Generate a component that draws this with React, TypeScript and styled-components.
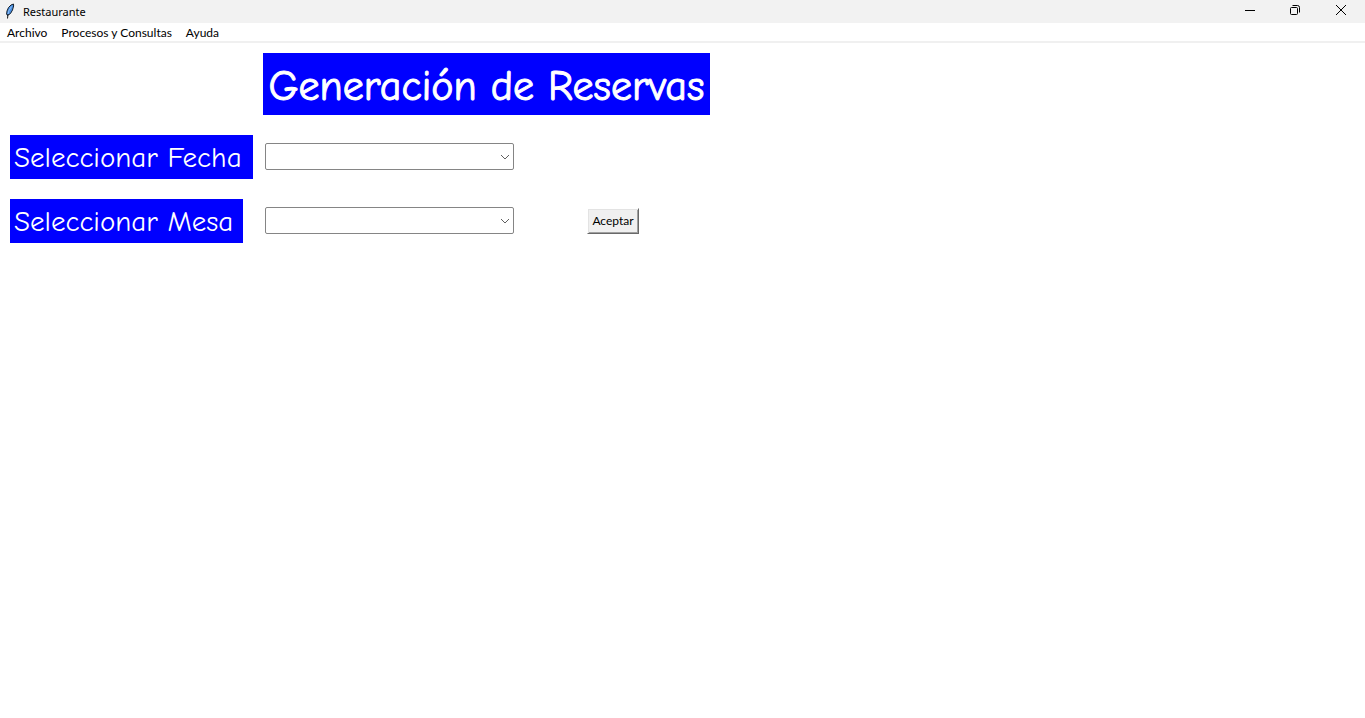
import React from "react";
import styled, { createGlobalStyle } from "styled-components";

const uiFont = `"Segoe UI", "Noto Sans", "Open Sans", sans-serif`;
const controlFont = `"Segoe UI", Lato, "Open Sans", sans-serif`;
const comicFont = `"Comic Sans MS", "Comic Neue", Lato, sans-serif`;

const GlobalStyle = createGlobalStyle`
  *, *::before, *::after { box-sizing: border-box; }
  body { margin: 0; background: #fff; color: #000; font: 11px/16px ${uiFont}; }
`;

const Window = styled.div`
  display: flex;
  flex-direction: column;
  min-height: 100vh;
`;

const TitleBar = styled.header`
  display: flex;
  align-items: center;
  height: 23px;
  padding-left: 3px;
  background: #f2f2f2;
`;

const WindowTitle = styled.span`
  flex: 1;
  margin-left: 4px;
`;

const WindowButtons = styled.div`
  display: flex;
  align-self: flex-start;
  padding-right: 1px;
`;

const WindowButton = styled.button`
  display: flex;
  align-items: center;
  justify-content: center;
  width: 46px;
  height: 20px;
  padding: 0;
  border: 0;
  background: transparent;
`;

const MenuBar = styled.nav`
  display: flex;
  height: 20px;
  border-bottom: 2px solid #f0f0f0;
`;

const MenuItem = styled.button`
  padding: 2px 7px 0;
  border: 0;
  background: transparent;
  font: 12px/16px ${controlFont};
  color: #000;
`;

const Form = styled.form`
  display: grid;
  grid-template-columns: 243px 447px;
  gap: 20px 10px;
  padding: 10px;
`;

const Heading = styled.h1`
  grid-column: 2;
  margin: 0;
  height: 62px;
  background: #00f;
  color: #fff;
  font: 400 42px/68px ${comicFont};
  -webkit-text-stroke: 1px #fff;
  text-align: center;
  white-space: nowrap;
`;

const FieldLabel = styled.label<{ $width: number }>`
  width: ${(p) => p.$width}px;
  height: 44px;
  padding-left: 4px;
  background: #00f;
  color: #fff;
  font: 400 29px/46px ${comicFont};
  white-space: nowrap;
`;

const FieldControls = styled.div`
  display: flex;
  align-items: center;
  gap: 73px;
  padding-left: 2px;
`;

const Combo = styled.div`
  display: grid;
  grid-template-rows: 27px;
  align-items: center;
  width: 249px;
  height: 28px;
  > * { grid-area: 1 / 1; }
`;

const Select = styled.select`
  appearance: none;
  width: 100%;
  height: 27px;
  padding: 0 24px 0 4px;
  border: 1px solid #858585;
  border-radius: 2px;
  background: #fff;
  font: 12px/16px ${controlFont};
`;

const Chevron = styled.svg`
  justify-self: end;
  margin-right: 4px;
  pointer-events: none;
`;

const AcceptButton = styled.button`
  width: 52px;
  height: 26px;
  padding: 0;
  border: 1px solid;
  border-color: #fff #696969 #696969 #fff;
  box-shadow: inset 1px 1px #e3e3e3, inset -1px -1px #a0a0a0;
  background: #f0f0f0;
  color: #000;
  font: 12px/16px ${controlFont};
`;

function FeatherIcon() {
  return (
    <svg width="16" height="18" viewBox="0 0 16 18" aria-hidden="true">
      <path d="M10.5 1 L8 2 L5.5 4.5 L4 8 L3.6 11 L4.5 12.5 L7.5 10.5 L9.5 7 L10.6 3 Z" fill="#4a90e2" stroke="#16202c" />
      <path d="M8.5 3.5 L6 7.5 L5 11" fill="none" stroke="#8fc0f8" />
      <path d="M5 11 L4.5 15.5" fill="none" stroke="#101418" />
    </svg>
  );
}

type ComboFieldProps = {
  id: string;
  label: string;
  labelWidth: number;
  children?: React.ReactNode;
};

function ComboField({ id, label, labelWidth, children }: ComboFieldProps) {
  return (
    <>
      <FieldLabel htmlFor={id} $width={labelWidth}>{label}</FieldLabel>
      <FieldControls>
        <Combo>
          <Select id={id} defaultValue="">
            <option value="" />
          </Select>
          <Chevron width="10" height="6" viewBox="0 0 10 6" aria-hidden="true">
            <path d="M1 1 L5 5 L9 1" fill="none" stroke="#606060" />
          </Chevron>
        </Combo>
        {children}
      </FieldControls>
    </>
  );
}

const menus = ["Archivo", "Procesos y Consultas", "Ayuda"];

export default function App() {
  return (
    <Window>
      <GlobalStyle />
      <TitleBar>
        <FeatherIcon />
        <WindowTitle>Restaurante</WindowTitle>
        <WindowButtons>
          <WindowButton type="button" aria-label="Minimizar">
            <svg width="12" height="10" viewBox="0 0 12 10">
              <path d="M2 5.5 H12" stroke="#000" />
            </svg>
          </WindowButton>
          <WindowButton type="button" aria-label="Restaurar">
            <svg width="10" height="10" viewBox="0 0 10 10" fill="none" stroke="#000">
              <rect x="0.5" y="2.5" width="7" height="7" rx="1" />
              <path d="M2.5 0.5 H7.5 Q9.5 0.5 9.5 2.5 V7.5" />
            </svg>
          </WindowButton>
          <WindowButton type="button" aria-label="Cerrar">
            <svg width="10" height="10" viewBox="0 0 10 10">
              <path d="M0 0 L10 10 M10 0 L0 10" stroke="#000" />
            </svg>
          </WindowButton>
        </WindowButtons>
      </TitleBar>
      <MenuBar>
        {menus.map((name) => (
          <MenuItem key={name} type="button">{name}</MenuItem>
        ))}
      </MenuBar>
      <Form onSubmit={(e) => e.preventDefault()}>
        <Heading>Generación de Reservas</Heading>
        <ComboField id="fecha" label="Seleccionar Fecha" labelWidth={243} />
        <ComboField id="mesa" label="Seleccionar Mesa" labelWidth={233}>
          <AcceptButton type="submit">Aceptar</AcceptButton>
        </ComboField>
      </Form>
    </Window>
  );
}
